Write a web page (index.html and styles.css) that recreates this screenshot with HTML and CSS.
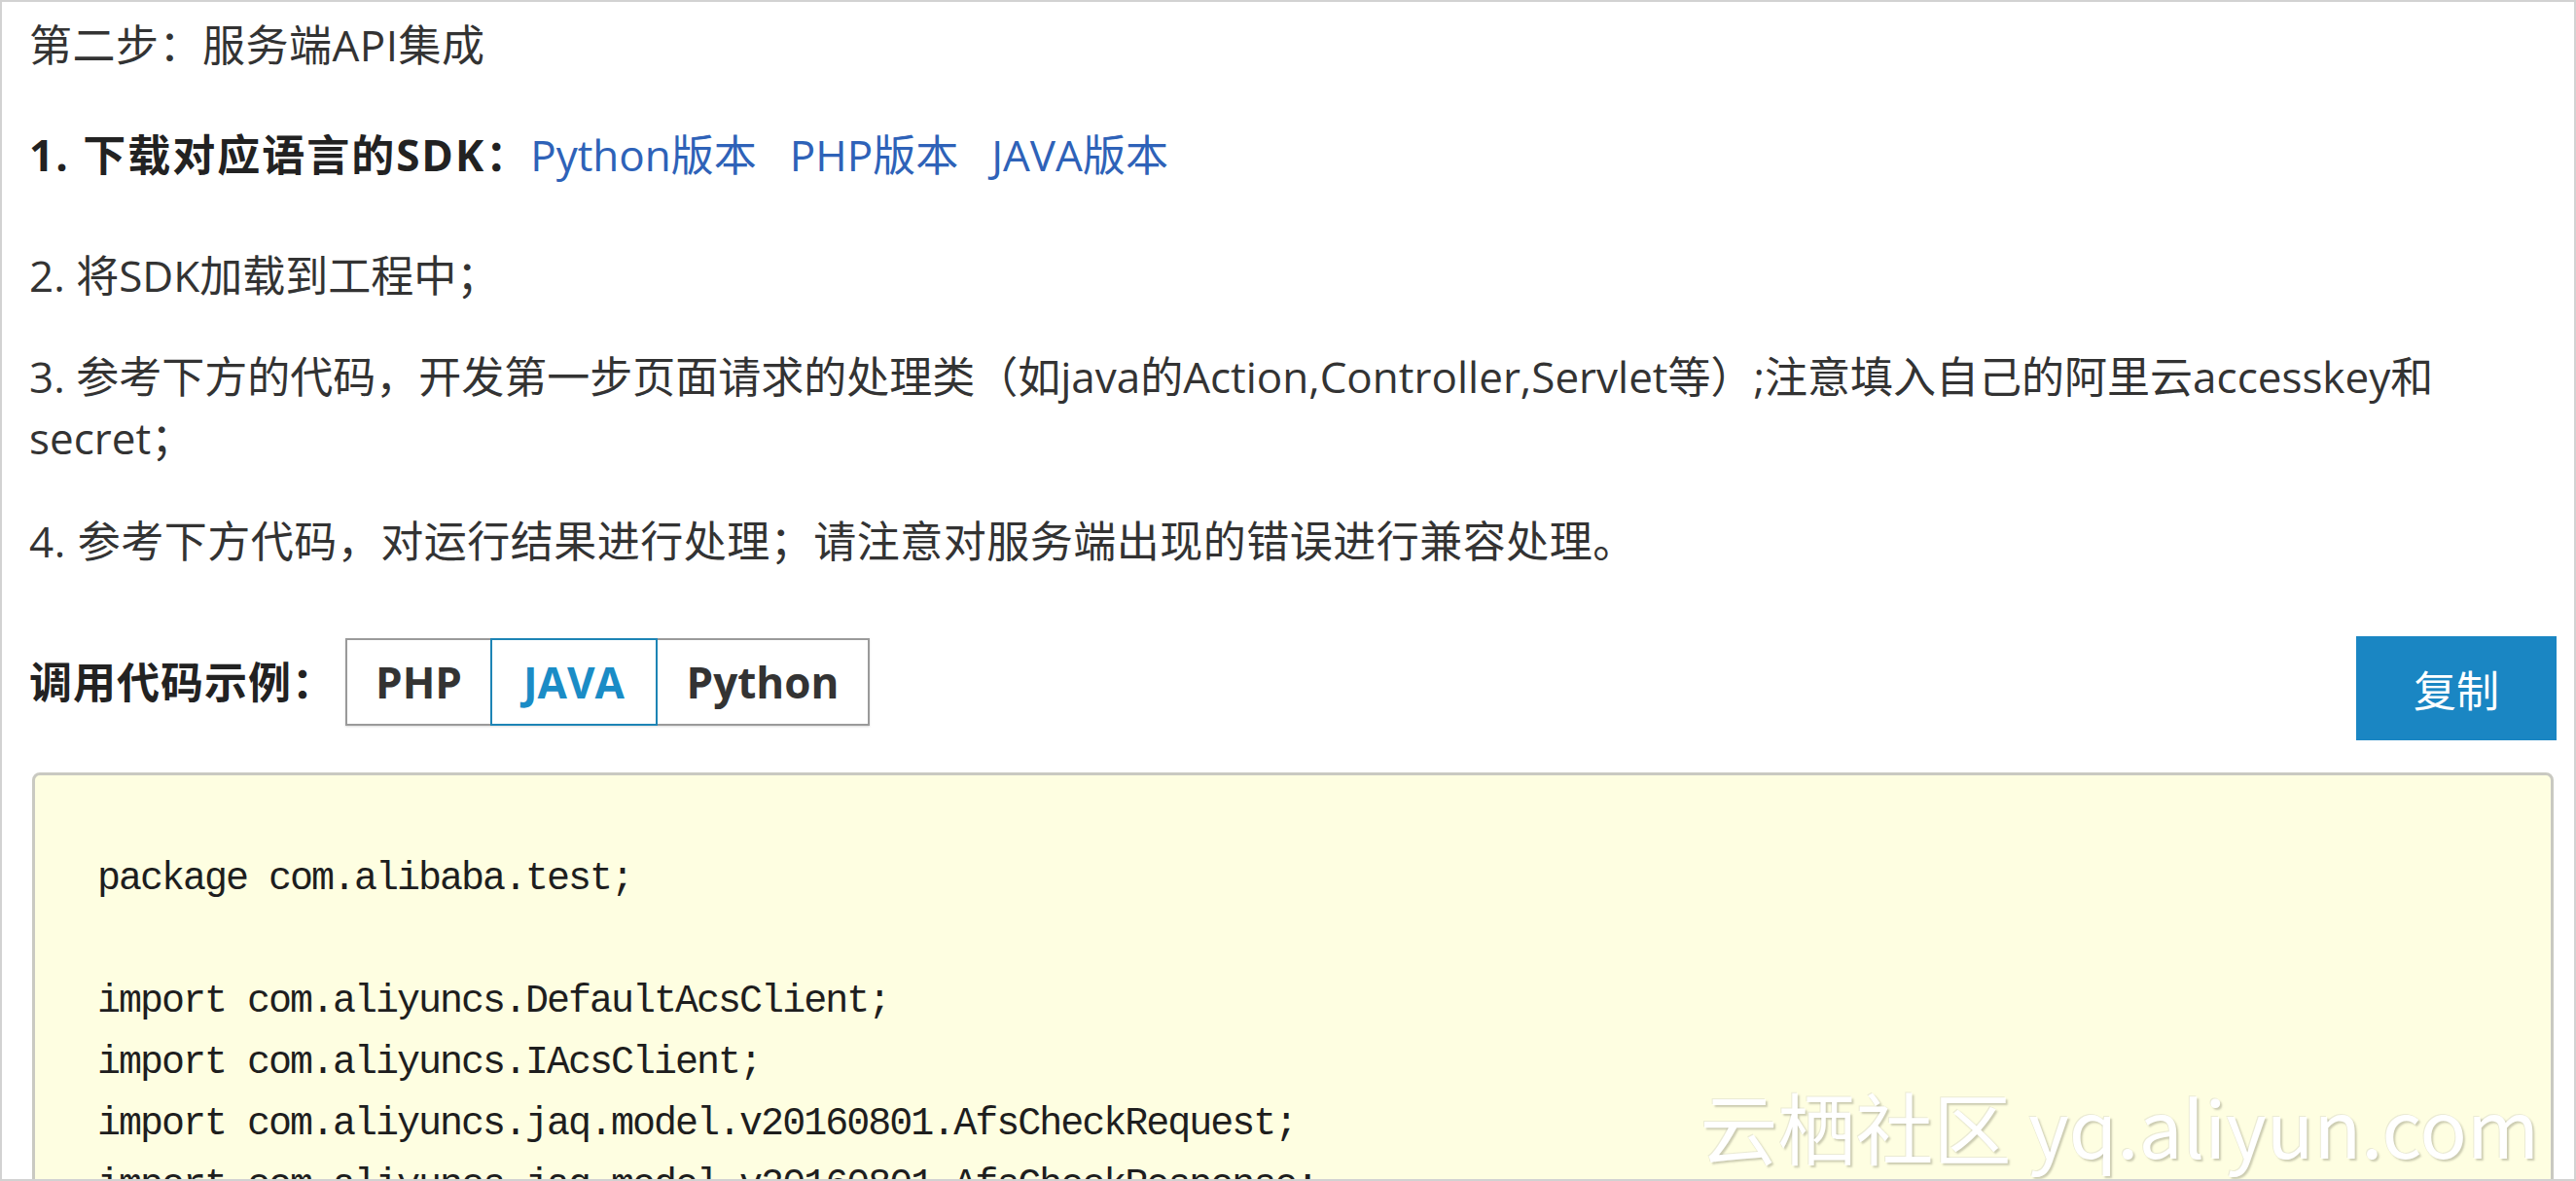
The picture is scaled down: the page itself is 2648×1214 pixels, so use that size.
FILE: index.html
```html
<!DOCTYPE html>
<html lang="zh-CN">
<head>
<meta charset="utf-8">
<title>服务端API集成</title>
<link rel="stylesheet" href="styles.css">
</head>
<body>
<div class="page">
  <p class="p1">第二步：服务端API集成</p>
  <p class="p2"><b>1. 下载对应语言的SDK：</b><a class="lnk" href="#">Python版本</a><a class="lnk" href="#">PHP版本</a><a class="lnk" href="#">JAVA版本</a></p>
  <p class="p3">2. 将SDK加载到工程中；</p>
  <p class="p4">3. 参考下方的代码，开发第一步页面请求的处理类（如java的Action,Controller,Servlet等）;注意填入自己的阿里云accesskey和<br>secret；</p>
  <p class="p5">4. 参考下方代码，对运行结果进行处理；请注意对服务端出现的错误进行兼容处理。</p>
  <div class="toolbar">
    <span class="label">调用代码示例：</span>
    <div class="tabs">
      <span class="tab tab-php">PHP</span>
      <span class="tab tab-java active">JAVA</span>
      <span class="tab tab-py">Python</span>
    </div>
    <button class="copy">复制</button>
  </div>
  <div class="code">
<pre>package com.alibaba.test;

import com.aliyuncs.DefaultAcsClient;
import com.aliyuncs.IAcsClient;
import com.aliyuncs.jaq.model.v20160801.AfsCheckRequest;
import com.aliyuncs.jaq.model.v20160801.AfsCheckResponse;
import com.aliyuncs.profile.DefaultProfile;</pre>
  </div>
  <div class="watermark">云栖社区 yq.aliyun.com</div>
</div>
</body>
</html>
```
FILE: styles.css
```css
html, body {
  margin: 0;
  padding: 0;
  background: #ffffff;
}
.page {
  position: relative;
  box-sizing: border-box;
  width: 2648px;
  height: 1214px;
  overflow: hidden;
  border: 2px solid #d2d2d2;
  padding: 13px 18px 0 28px;
  font-family: "Open Sans", "Noto Sans CJK SC", sans-serif;
  font-size: 44px;
  line-height: 63px;
  color: #333333;
}
p {
  margin: 0;
}
.p1 { letter-spacing: 0.5px; }
.p2 { margin-top: 50px; }
.p3 { margin-top: 61px; }
.p4 { margin-top: 41px; }
.p5 { margin-top: 43px; letter-spacing: 0.5px; }
.p2 b {
  color: #222222;
  font-weight: 700;
  letter-spacing: 2px;
}
.lnk {
  color: #2e62b8;
  text-decoration: none;
  margin-right: 34px;
}
.toolbar {
  display: flex;
  align-items: flex-start;
  margin-top: 66px;
  height: 107px;
}
.label {
  font-weight: 700;
  color: #222222;
  line-height: 90px;
  margin-top: 2px;
  margin-right: 10px;
  letter-spacing: 1px;
}
.tabs {
  display: flex;
  margin-top: 2px;
  height: 90px;
  border: 2px solid #9a9a9a;
  box-sizing: border-box;
  box-shadow: 0 1px 2px rgba(0,0,0,0.15);
}
.tab {
  display: flex;
  align-items: center;
  justify-content: center;
  box-sizing: border-box;
  font-weight: 700;
  font-size: 44px;
  color: #333333;
  height: 86px;
}
.tab-php { width: 147px; }
.tab-java { width: 172px; }
.tab-py { width: 216px; }
.tab.active {
  color: #1a8cc6;
  border: 2px solid #1d84b5;
  height: 90px;
  margin-top: -2px;
}
.copy {
  margin-left: auto;
  width: 206px;
  height: 107px;
  border: none;
  background: #1a86c3;
  color: #ffffff;
  font-family: "Open Sans", "Noto Sans CJK SC", sans-serif;
  font-size: 44px;
  padding: 0;
}
.code {
  margin: 33px 3px 0 3px;
  background: #fefee1;
  border: 3px solid #c9c9c1;
  border-radius: 8px;
  padding: 75px 60px 0 64px;
  height: 600px;
}
.code pre {
  margin: 0;
  font-family: "Liberation Mono", monospace;
  font-size: 40px;
  letter-spacing: -2px;
  line-height: 63px;
  color: #1e1e1e;
}
.watermark {
  position: absolute;
  right: 36px;
  bottom: 16px;
  font-family: "Noto Sans CJK SC", sans-serif;
  font-size: 80px;
  line-height: 1;
  color: #ffffff;
  text-shadow: 2px 2px 2px rgba(90, 90, 70, 0.3), -1px -1px 0 rgba(200,200,190,0.35);
  white-space: nowrap;
}
```
